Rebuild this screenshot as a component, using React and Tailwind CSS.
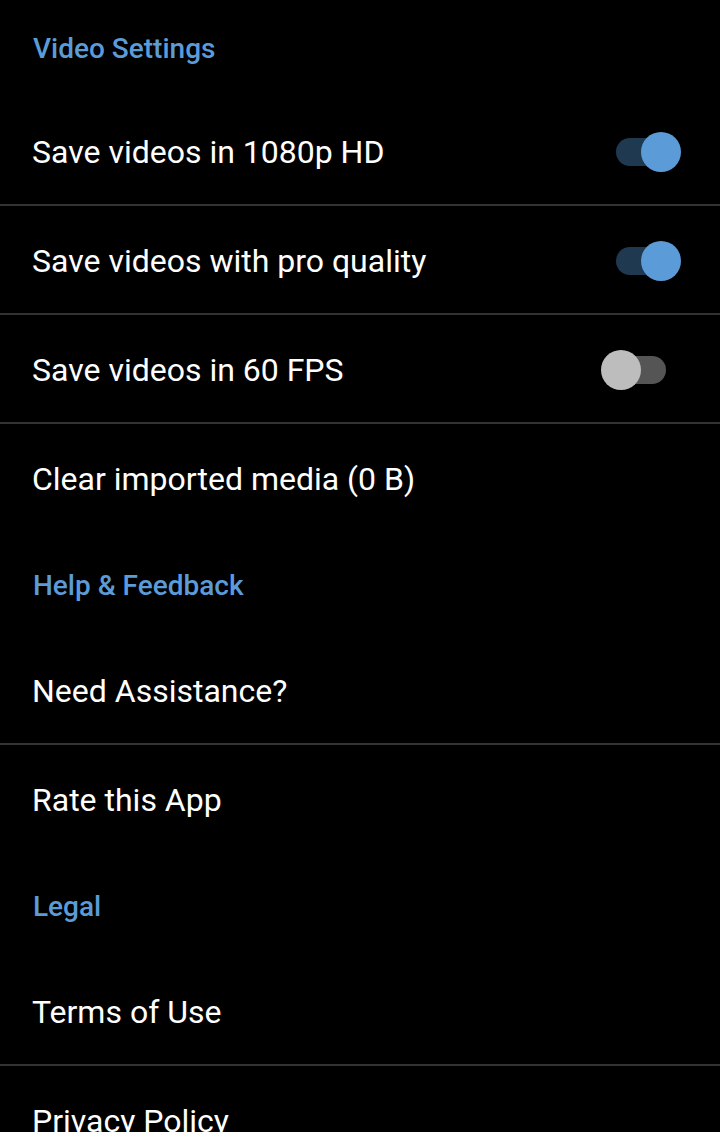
const ROBOTO = { fontFamily: "Roboto, 'Noto Sans', sans-serif" };

function Toggle({ on }) {
  return (
    <div className="relative w-[50px] h-[28px] mr-[54px] flex-shrink-0">
      <div
        className={`absolute inset-0 rounded-full ${on ? "bg-[#1f3a50]" : "bg-[#555555]"}`}
      />
      <div
        className={`absolute top-[-6px] w-[40px] h-[40px] rounded-full ${
          on ? "left-[25px] bg-[#5b9bd8]" : "left-[-15px] bg-[#bdbdbd]"
        }`}
      />
    </div>
  );
}

function Header({ children, first }) {
  return (
    <div
      className={`flex items-center px-[33px] text-[28px] font-medium text-[#5b9bd8] ${
        first ? "h-[97px]" : "h-[105px] pt-[4px]"
      }`}
    >
      {children}
    </div>
  );
}

function Row({ label, toggle, divider = true }) {
  return (
    <div className={divider ? "border-b-2 border-[#333333]" : ""}>
      <div className="h-[107px] flex items-center justify-between pl-[32px] pt-[3px]">
        <span className="text-[32px] text-white">{label}</span>
        {toggle !== undefined && <Toggle on={toggle} />}
      </div>
    </div>
  );
}

export default function App() {
  return (
    <div className="bg-black w-[720px] h-[1132px] overflow-hidden" style={ROBOTO}>
      <Header first>Video Settings</Header>
      <Row label="Save videos in 1080p HD" toggle={true} />
      <Row label="Save videos with pro quality" toggle={true} />
      <Row label="Save videos in 60 FPS" toggle={false} />
      <Row label="Clear imported media (0 B)" divider={false} />
      <Header>Help &amp; Feedback</Header>
      <Row label="Need Assistance?" />
      <Row label="Rate this App" divider={false} />
      <Header>Legal</Header>
      <Row label="Terms of Use" />
      <Row label="Privacy Policy" divider={false} />
    </div>
  );
}
